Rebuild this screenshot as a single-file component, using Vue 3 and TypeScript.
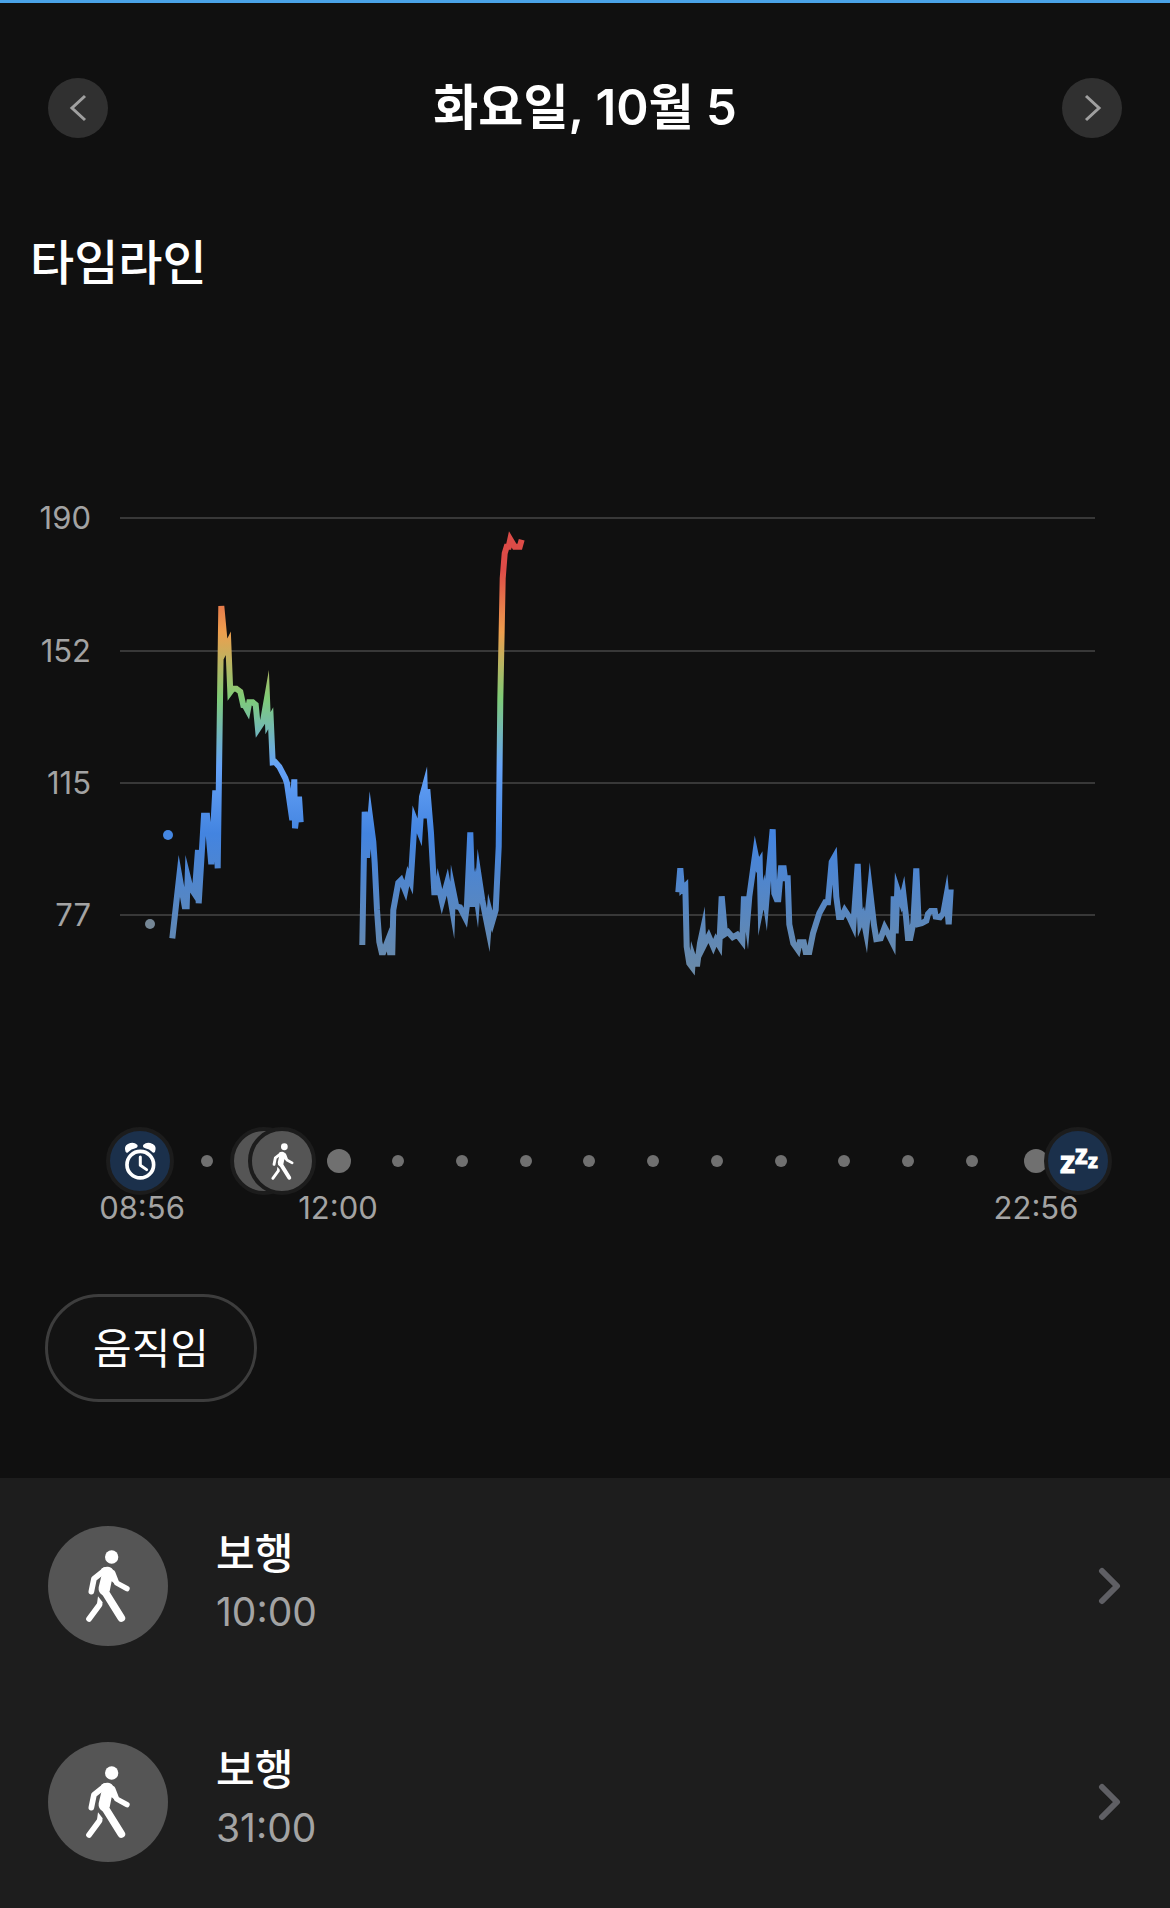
<script setup lang="ts">
type Point = [number, number]

interface Run {
  originX: number
  originY: number
  samples: string
}

interface Activity {
  id: number
  name: string
  duration: string
}

const gridLines = [
  { value: 190, y: 38 },
  { value: 152, y: 171 },
  { value: 115, y: 303 },
  { value: 77, y: 435 },
]

// Heart-rate samples, stored in thirds of a chart unit from each run's origin.
const runs: Run[] = [
  {
    originX: 140,
    originY: 110,
    samples:
      '97,1045 118,858 134,949 140,949 143,860 151,892 164,912 174,780 176,940 192,677 201,677 214,823 226,601 233,835 244,48 256,178 265,160 271,306 278,296 289,296 301,305 310,346 315,347 323,362 328,337 338,337 347,344 354,417 369,394 381,325 384,400 392,385 398,517 405,516 418,530 436,565 441,580 457,690 463,568 465,715 477,620 482,697',
  },
  {
    originX: 340,
    originY: 20,
    samples:
      '67,1335 74,935 81,1073 91,957 100,1025 104,1090 111,1230 118,1325 125,1357 130,1357 145,1318 150,1357 157,1357 160,1230 175,1148 183,1140 196,1172 205,1128 212,1145 224,958 239,997 246,890 254,860 257,955 262,868 273,1000 283,1177 292,1177 295,1155 306,1205 322,1146 330,1190 337,1230 339,1170 349,1219 360,1222 376,1253 381,1215 391,997 398,1220 406,1165 411,1200 416,1128 427,1200 445,1290 449,1235 457,1265 467,1230 476,1040 481,600 488,235 494,160 500,140 506,140 511,118 524,140 539,140 545,119',
  },
  {
    originX: 660,
    originY: 320,
    samples:
      '55,277 61,205 66,268 76,258 80,440 88,490 97,502 99,470 106,491 112,491 120,430 128,392 130,440 146,408 160,440 168,420 178,437 185,289 195,402 204,396 218,412 232,404 247,424 252,289 262,364 268,290 286,160 293,195 299,185 302,325 312,275 318,315 325,230 338,88 343,280 350,298 355,298 363,205 371,205 375,235 383,235 388,373 400,430 414,450 419,427 431,427 437,456 448,456 459,400 478,340 496,307 504,307 515,186 523,172 529,290 537,351 545,351 554,331 568,352 580,378 593,192 601,370 609,350 618,397 630,272 642,375 649,417 662,415 674,382 684,400 698,428 701,289 707,400 712,268 724,305 730,280 738,350 744,414 751,414 760,370 769,205 776,372 785,370 799,362 804,342 812,333 824,333 827,350 840,352 850,340 859,290 866,373 872,268',
  },
]

function toPoints(run: Run): string {
  return run.samples
    .split(' ')
    .map((pair) => pair.split(',').map(Number) as Point)
    .map(([x, y]) => `${(run.originX + x / 3).toFixed(1)},${(run.originY + y / 3).toFixed(1)}`)
    .join(' ')
}

const hourDots = [207, 398, 462, 526, 589, 653, 717, 781, 844, 908, 972]

const timeLabels = [
  { text: '08:56', x: 142 },
  { text: '12:00', x: 338 },
  { text: '22:56', x: 1036 },
]

const activities: Activity[] = [
  { id: 1, name: '보행', duration: '10:00' },
  { id: 2, name: '보행', duration: '31:00' },
]
</script>

<template>
  <main class="screen">
    <svg class="defs" width="0" height="0" aria-hidden="true">
      <symbol id="walker" viewBox="0 0 360 360">
        <circle cx="191" cy="93" r="20" fill="#fff" />
        <g fill="none" stroke="#fff" stroke-linecap="round" stroke-linejoin="round">
          <path d="M170 133 L138 158 L130 197" stroke-width="17" />
          <path d="M194 140 L206 171 L237 188" stroke-width="16" />
          <path d="M169 194 L220 276" stroke-width="23" />
          <path d="M154 237 L123 279" stroke-width="17" />
        </g>
        <path
          d="M160 128 Q168 121 180 122 Q193 123 199 139 L206 160 L199 172 L191 166 L185 196 L164 208 Q150 200 152 184 L160 150Z M150 211 L164 229 L162 240 L147 233Z"
          fill="#fff"
        />
      </symbol>
    </svg>

    <header class="header">
      <button class="round" type="button" aria-label="이전 날짜">
        <svg viewBox="0 0 60 60"><path d="M37 18 L24 30 L37 42" /></svg>
      </button>
      <h1 class="date">화요일, 10월 5</h1>
      <button class="round" type="button" aria-label="다음 날짜">
        <svg viewBox="0 0 60 60"><path d="M24 18 L37 30 L24 42" /></svg>
      </button>
    </header>

    <h2 class="heading">타임라인</h2>

    <svg class="chart" viewBox="0 0 1170 600" role="img" aria-label="심박수">
      <defs>
        <linearGradient id="zones" gradientUnits="userSpaceOnUse" x1="0" y1="90" x2="0" y2="490">
          <stop offset="0" stop-color="#dd4b47" />
          <stop offset="0.155" stop-color="#ee9f4e" />
          <stop offset="0.32" stop-color="#7fcc77" />
          <stop offset="0.49" stop-color="#66a3f8" />
          <stop offset="0.66" stop-color="#4384e0" />
          <stop offset="0.87" stop-color="#5a87bd" />
          <stop offset="1" stop-color="#6a8aa8" />
        </linearGradient>
      </defs>
      <g v-for="line in gridLines" :key="line.value">
        <path class="grid" :d="`M120 ${line.y} H1095`" />
        <text class="label" x="91" :y="line.y + 11" text-anchor="end">{{ line.value }}</text>
      </g>
      <circle cx="168" cy="355" r="5" fill="#4587e2" />
      <circle cx="150" cy="444" r="5" fill="#758796" />
      <polyline v-for="run in runs" :key="run.originX" class="pulse" :points="toPoints(run)" />
    </svg>

    <svg class="day" viewBox="0 0 1170 150" role="img" aria-label="하루 활동">
      <circle v-for="x in hourDots" :key="x" class="dot" :cx="x" cy="81" r="6" />
      <circle class="dot" cx="339" cy="81" r="12" />
      <circle class="dot" cx="1036" cy="81" r="12" />

      <circle class="pin night" cx="140" cy="81" r="32" />
      <g transform="translate(110 51) scale(0.333)" fill="none" stroke="#fff" stroke-linecap="round" stroke-linejoin="round">
        <circle cx="91" cy="101" r="40" stroke-width="11" />
        <path d="M91 78 V103 L110 116" stroke-width="9" />
        <path
          d="M49 61 Q44 47 55 41 Q70 34 80 43 Q82 47 76 49 Q62 51 54 61 Q51 65 49 61Z M133 61 Q138 47 127 41 Q112 34 102 43 Q100 47 106 49 Q120 51 128 61 Q131 65 133 61Z"
          fill="#fff"
          stroke-width="5"
        />
      </g>

      <circle class="pin" cx="264" cy="81" r="32" />
      <circle class="pin" cx="282" cy="81" r="32" />
      <use href="#walker" x="252" y="51" width="61" height="61" />

      <circle class="pin night" cx="1078" cy="81" r="32" />
      <g class="snore">
        <text x="1060" y="93" font-size="31">z</text>
        <text x="1075" y="84" font-size="26">z</text>
        <text x="1088" y="88" font-size="20">z</text>
      </g>

      <text v-for="t in timeLabels" :key="t.text" class="label" :x="t.x" y="139" text-anchor="middle">{{ t.text }}</text>
    </svg>

    <button class="chip" type="button">움직임</button>

    <ul class="list">
      <li v-for="a in activities" :key="a.id">
        <a class="row" href="#">
          <span class="avatar"><svg viewBox="0 0 360 360"><use href="#walker" /></svg></span>
          <span class="info">
            <span class="name">{{ a.name }}</span>
            <span class="time">{{ a.duration }}</span>
          </span>
          <svg class="chevron" viewBox="0 0 24 40"><path d="M4 5 L19 20 L4 35" /></svg>
        </a>
      </li>
    </ul>
  </main>
</template>

<style>
body {
  margin: 0;
  background: #101010;
}
</style>

<style scoped>
.screen {
  min-height: 100vh;
  box-sizing: border-box;
  display: flex;
  flex-direction: column;
  border-top: 3px solid #4aa3e8;
  background: #101010;
  color: #fff;
  font-family: Inter, "Noto Sans CJK KR", sans-serif;
}
.defs {
  position: absolute;
}
.header {
  display: flex;
  align-items: center;
  justify-content: space-between;
  padding: 75px 48px 0;
}
.round {
  width: 60px;
  height: 60px;
  padding: 0;
  border: 0;
  border-radius: 50%;
  background: #303030;
}
.round svg {
  display: block;
}
.round path {
  fill: none;
  stroke: #a0a0a0;
  stroke-width: 3;
}
.date {
  margin: 0;
  font-size: 49px;
  line-height: 60px;
  font-weight: 600;
}
.heading {
  margin: 94px 30px 0;
  font-size: 48px;
  line-height: 62px;
  font-weight: 500;
}
.chart {
  display: block;
  width: 100%;
  margin-top: 186px;
}
.grid {
  stroke: #383838;
  stroke-width: 2;
}
.pulse {
  fill: none;
  stroke: url(#zones);
  stroke-width: 6;
  stroke-miterlimit: 10;
}
.label {
  fill: #a3a3a3;
  font-size: 31px;
}
.day {
  display: block;
  width: 100%;
}
.dot {
  fill: #707070;
}
.pin {
  fill: #555;
  stroke: #1c1c1c;
  stroke-width: 4;
}
.night {
  fill: #1b304b;
}
.snore {
  fill: #fff;
  stroke: #fff;
  stroke-width: 1;
  font-family: "Open Sans", sans-serif;
  font-weight: 700;
}
.chip {
  align-self: flex-start;
  height: 108px;
  margin: 64px 45px 76px;
  padding: 0 45px 6px;
  border: 3px solid #3d3d3d;
  border-radius: 54px;
  background: #131313;
  color: #fff;
  font-family: inherit;
  font-size: 42px;
  font-weight: 400;
}
.list {
  flex: 1;
  display: flex;
  flex-direction: column;
  gap: 96px;
  margin: 0;
  padding: 48px 0 40px;
  list-style: none;
  background: #1d1d1d;
}
.row {
  display: flex;
  align-items: center;
  padding: 0 48px;
  color: inherit;
  text-decoration: none;
}
.avatar {
  width: 120px;
  height: 120px;
  border-radius: 50%;
  background: #555;
}
.avatar svg {
  display: block;
}
.info {
  flex: 1;
  display: flex;
  flex-direction: column;
  margin-left: 48px;
  padding-bottom: 4px;
}
.name {
  font-size: 42px;
  line-height: 56px;
  font-weight: 500;
}
.time {
  color: #a3a3a3;
  font-size: 39px;
  line-height: 60px;
}
.chevron {
  width: 24px;
  height: 40px;
}
.chevron path {
  fill: none;
  stroke: #5f5f64;
  stroke-width: 6;
  stroke-linecap: round;
  stroke-linejoin: round;
}
</style>
